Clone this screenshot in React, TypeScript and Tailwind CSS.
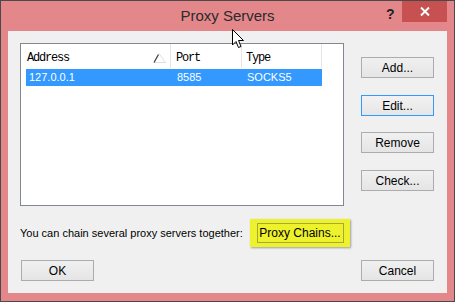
import React from "react";

const sans = { fontFamily: '"Liberation Sans", Arial, sans-serif' };

function Btn({ label, className = "", focused = false }: { label: string; className?: string; focused?: boolean }) {
  return (
    <div
      className={`flex h-[21px] w-[73px] items-center justify-center text-[12px] text-black ${
        focused ? "border border-[#3399ff] bg-gradient-to-b from-[#f2f2f2] to-[#e6e6e6]" : "border border-[#acacac] bg-gradient-to-b from-[#f0f0f0] to-[#e5e5e5]"
      } ${className}`}
    >
      {label}
    </div>
  );
}

export default function App() {
  return (
    <div style={sans} className="relative flex h-[302px] w-[455px] flex-col border border-[#4a4a4a] bg-[#e3878a]">
      {/* title bar */}
      <div className="relative flex h-[30px] items-center justify-center">
        <span className="text-[15px] text-[#2a2a2a]">Proxy Servers</span>
        <span className="absolute left-[385px] top-[3px] text-[14px] font-bold text-[#222]">?</span>
        <div className="absolute left-[401px] top-0 flex h-[21px] w-[45px] items-center justify-center bg-[#c75050]">
          <svg width="10" height="9" viewBox="0 0 10 9">
            <path d="M1 0.5 L9 8.5 M9 0.5 L1 8.5" stroke="white" strokeWidth="2" />
          </svg>
        </div>
      </div>

      {/* client area */}
      <div className="mx-[7px] flex h-[262px] flex-col bg-[#f0f0f0] pl-[12px] pt-[12px]">
        <div className="flex">
          {/* list */}
          <div className="h-[163px] w-[324px] border border-[#828790] bg-white px-[5px]">
            <div className="flex h-[24px] items-center text-[#000]" style={{ fontFamily: '"Liberation Mono", monospace' }}>
              <div className="relative flex h-full w-[145px] items-center border-r border-[#e5e5e5] pl-[1px] pt-[3px] text-[12px] tracking-[-1.2px]">
                Address
                <svg className="absolute left-[127px] top-[9px]" width="13" height="10" viewBox="0 0 13 10">
                  <path d="M6 0.5 L12.5 9.5 L1 9.5" fill="none" stroke="#e0e0e0" strokeWidth="1" />
                  <path d="M1 9.5 L5.5 1.5" stroke="#444" strokeWidth="1.3" />
                </svg>
              </div>
              <div className="flex h-full w-[71px] items-center border-r border-[#e5e5e5] pl-[5px] pt-[3px] text-[12px] tracking-[-1.2px]">Port</div>
              <div className="flex h-full w-[80px] items-center border-r border-[#e5e5e5] pl-[4px] pt-[3px] text-[12px] tracking-[-1.2px]">Type</div>
            </div>
            <div className="mt-[1px] flex h-[17px] w-[296px] items-center bg-[#3399ff] text-[11px] text-white">
              <div className="w-[145px] pl-[3px]">127.0.0.1</div>
              <div className="w-[71px] pl-[6px]">8585</div>
              <div className="w-[80px] pl-[5px]">SOCKS5</div>
            </div>
          </div>

          {/* right buttons */}
          <div className="ml-[17px] flex flex-col">
            <Btn label="Add..." className="mt-[14px]" />
            <Btn label="Edit..." className="mt-[17px]" focused />
            <Btn label="Remove" className="mt-[16px]" />
            <Btn label="Check..." className="mt-[17px]" />
          </div>
        </div>

        {/* chain row */}
        <div className="mt-[13px] flex h-[28px] items-center">
          <span className="w-[230px] whitespace-nowrap text-[11px] text-black">You can chain several proxy servers together:</span>
          <div className="flex h-[28px] w-[100px] items-center justify-center bg-[#eef22c] shadow-[1px_1px_2px_rgba(0,0,0,0.35)]">
            <div className="flex h-[20px] w-[87px] items-center justify-center border border-[#a6a83a] text-[12px] text-black">
              Proxy Chains...
            </div>
          </div>
        </div>

        {/* bottom buttons */}
        <div className="mt-[13px] flex pr-[13px]">
          <Btn label="OK" className="ml-[1px]" />
          <div className="flex-1" />
          <Btn label="Cancel" />
        </div>
      </div>

      {/* mouse cursor */}
      <svg className="absolute left-[231px] top-[28px]" width="13" height="20" viewBox="0 0 13 20">
        <path
          d="M0.5 0.5 L0.5 16 L4 12.5 L6.5 18.5 L9 17.5 L6.5 11.5 L11.5 11.5 Z"
          fill="white"
          stroke="black"
          strokeWidth="1"
          strokeLinejoin="miter"
        />
      </svg>
    </div>
  );
}
